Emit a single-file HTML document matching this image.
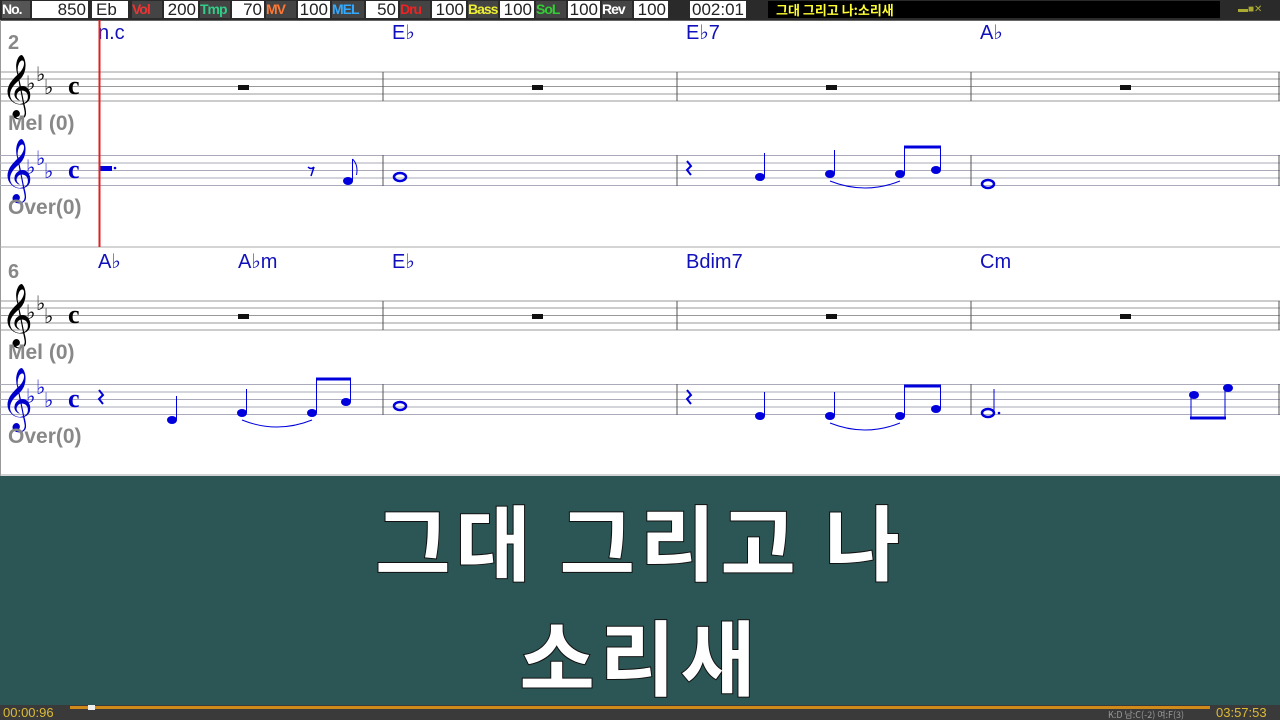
<!DOCTYPE html>
<html><head><meta charset="utf-8"><style>
body{margin:0;width:1280px;height:720px;overflow:hidden;background:#fff;font-family:"Liberation Sans","Noto Sans CJK KR",sans-serif;position:relative}
.top{position:absolute;left:0;top:0;width:1280px;height:20px;background:#2a2a2a;border-bottom:1px solid #666}
.top span{position:absolute;top:1px;height:17px;line-height:17px;font-size:17px}
.w{background:#fff;color:#222;text-align:right;padding-right:2px;box-sizing:border-box}
.lab{font-weight:bold;font-size:14px!important;letter-spacing:-1px}
.band{position:absolute;left:0;top:476px;width:1280px;height:229px;background:#2c5555}
.t{position:absolute;left:0;width:1280px;text-align:center;color:#fff;font-family:"Noto Sans CJK KR",sans-serif;font-weight:700;font-size:82px;letter-spacing:5px;line-height:1;-webkit-text-stroke:2px #111;paint-order:stroke fill}
.bot{position:absolute;left:0;top:705px;width:1280px;height:15px;background:#3a3a3a}
</style></head><body>
<div class="top">
<span class="lab" style="left:2px;width:28px;background:#555;color:#fff">No.</span>
<span class="w" style="left:32px;width:56px">850</span>
<span class="w" style="left:92px;width:36px;text-align:left;padding-left:4px">Eb</span>
<span class="lab" style="left:132px;width:30px;background:#444;color:#e33">Vol</span>
<span class="w" style="left:164px;width:34px">200</span>
<span class="lab" style="left:200px;width:30px;background:#444;color:#3c8">Tmp</span>
<span class="w" style="left:232px;width:32px">70</span>
<span class="lab" style="left:266px;width:30px;background:#444;color:#f73">MV</span>
<span class="w" style="left:298px;width:32px">100</span>
<span class="lab" style="left:332px;width:32px;background:#444;color:#3af">MEL</span>
<span class="w" style="left:366px;width:32px">50</span>
<span class="lab" style="left:400px;width:30px;background:#444;color:#e22">Dru</span>
<span class="w" style="left:432px;width:34px">100</span>
<span class="lab" style="left:468px;width:30px;background:#444;color:#ee3">Bass</span>
<span class="w" style="left:500px;width:34px">100</span>
<span class="lab" style="left:536px;width:30px;background:#444;color:#3c3">SoL</span>
<span class="w" style="left:568px;width:32px">100</span>
<span class="lab" style="left:602px;width:30px;background:#444;color:#fff">Rev</span>
<span class="w" style="left:634px;width:34px">100</span>
<span class="w" style="left:690px;width:56px">002:01</span>
<span style="left:768px;width:452px;background:#000;color:#ff3;font-weight:bold;font-size:13px;padding-left:8px;box-sizing:border-box;font-family:'Noto Sans CJK KR',sans-serif">그대 그리고 나:소리새</span>
<span style="left:1238px;width:40px;color:#aa3;font-size:10px">▬■✕</span>
</div>
<svg width="1280" height="476" style="position:absolute;left:0;top:0" font-family="Liberation Sans">
<line x1="0.5" y1="20" x2="0.5" y2="476" stroke="#999"/>
<line x1="0" y1="247" x2="1280" y2="247" stroke="#aaa"/>
<line x1="0" y1="475" x2="1280" y2="475" stroke="#aaa"/>
<g id="sys">
<g stroke="#999" stroke-width="1"><line x1="0" y1="72" x2="1280" y2="72"/><line x1="0" y1="79" x2="1280" y2="79"/><line x1="0" y1="86.5" x2="1280" y2="86.5"/><line x1="0" y1="94" x2="1280" y2="94"/><line x1="0" y1="101" x2="1280" y2="101"/></g>
<g stroke="#aab" stroke-width="1"><line x1="0" y1="155.5" x2="1280" y2="155.5"/><line x1="0" y1="163" x2="1280" y2="163"/><line x1="0" y1="170.5" x2="1280" y2="170.5"/><line x1="0" y1="178" x2="1280" y2="178"/><line x1="0" y1="185.5" x2="1280" y2="185.5"/></g>
<g stroke="#555"><line x1="383" y1="72" x2="383" y2="101"/><line x1="677" y1="72" x2="677" y2="101"/><line x1="971" y1="72" x2="971" y2="101"/><line x1="1279" y1="72" x2="1279" y2="101"/>
<line x1="383" y1="155" x2="383" y2="186"/><line x1="677" y1="155" x2="677" y2="186"/><line x1="971" y1="155" x2="971" y2="186"/><line x1="1279" y1="155" x2="1279" y2="186"/></g>
<text x="1" y="104" font-size="54" font-family="DejaVu Sans">𝄞</text>
<text x="26" y="90" font-size="20">♭</text><text x="36" y="81" font-size="20">♭</text><text x="44" y="94" font-size="20">♭</text>
<text x="68" y="94" font-size="26" font-weight="bold" font-family="Liberation Serif">c</text>
<g fill="#00c"><text x="1" y="188" font-size="54" font-family="DejaVu Sans">𝄞</text>
<text x="26" y="174" font-size="20">♭</text><text x="36" y="165" font-size="20">♭</text><text x="44" y="178" font-size="20">♭</text>
<text x="68" y="178" font-size="26" font-weight="bold" font-family="Liberation Serif">c</text></g>
<text x="8" y="130" font-size="21" font-weight="bold" fill="#888">Mel (0)</text>
<text x="8" y="214" font-size="21" font-weight="bold" fill="#888">Over(0)</text>
<rect x="238" y="85" width="11" height="5" fill="#111"/><rect x="532" y="85" width="11" height="5" fill="#111"/><rect x="826" y="85" width="11" height="5" fill="#111"/><rect x="1120" y="85" width="11" height="5" fill="#111"/>
</g>
<use href="#sys" y="229"/>
<text x="8" y="49" font-size="20" font-weight="bold" fill="#888">2</text>
<text x="8" y="278" font-size="20" font-weight="bold" fill="#888">6</text>
<g fill="#11b" font-size="20">
<text x="98" y="39">n.c</text><text x="392" y="39">E♭</text><text x="686" y="39">E♭7</text><text x="980" y="39">A♭</text>
<text x="98" y="268">A♭</text><text x="238" y="268">A♭m</text><text x="392" y="268">E♭</text><text x="686" y="268">Bdim7</text><text x="980" y="268">Cm</text>
</g>
<g fill="#00d" stroke="#00d">
<rect x="100" y="166" width="12" height="5" stroke="none"/><circle cx="115" cy="168" r="1.3" stroke="none"/>
<path d="M308 167 q3 3 6 0 l-3 9" fill="none" stroke-width="1.5"/>
<ellipse cx="348" cy="181" rx="5" ry="4" stroke="none"/><line x1="352.5" y1="181" x2="352.5" y2="159"/><path d="M352.5 159 q6 6 4 16" fill="none"/>
<ellipse cx="400" cy="177" rx="6" ry="4" fill="none" stroke-width="2.5"/>
<path d="M687 161 l4 5 l-4 4 l4 5" fill="none" stroke-width="2"/>
<ellipse cx="760" cy="177" rx="5" ry="4" stroke="none"/><line x1="764.5" y1="177" x2="764.5" y2="153"/>
<ellipse cx="830" cy="174" rx="5" ry="4" stroke="none"/><line x1="834.5" y1="174" x2="834.5" y2="150"/>
<ellipse cx="900" cy="174" rx="5" ry="4" stroke="none"/><line x1="904.5" y1="174" x2="904.5" y2="146"/>
<ellipse cx="936" cy="170" rx="5" ry="4" stroke="none"/><line x1="940.5" y1="170" x2="940.5" y2="146"/>
<line x1="904" y1="147" x2="941" y2="147" stroke-width="3"/>
<path d="M830 181 q35 14 70 0" fill="none"/>
<ellipse cx="988" cy="184" rx="6" ry="4" fill="none" stroke-width="2.5"/>
<path d="M99 390 l4 5 l-4 4 l4 5" fill="none" stroke-width="2"/>
<ellipse cx="172" cy="420" rx="5" ry="4" stroke="none"/><line x1="176.5" y1="420" x2="176.5" y2="396"/>
<ellipse cx="242" cy="413" rx="5" ry="4" stroke="none"/><line x1="246.5" y1="413" x2="246.5" y2="389"/>
<ellipse cx="312" cy="413" rx="5" ry="4" stroke="none"/><line x1="316.5" y1="413" x2="316.5" y2="378"/>
<ellipse cx="346" cy="402" rx="5" ry="4" stroke="none"/><line x1="350.5" y1="402" x2="350.5" y2="378"/>
<line x1="316" y1="379" x2="351" y2="379" stroke-width="3"/>
<path d="M242 420 q35 14 70 0" fill="none"/>
<ellipse cx="400" cy="406" rx="6" ry="4" fill="none" stroke-width="2.5"/>
<path d="M687 390 l4 5 l-4 4 l4 5" fill="none" stroke-width="2"/>
<ellipse cx="760" cy="416" rx="5" ry="4" stroke="none"/><line x1="764.5" y1="416" x2="764.5" y2="392"/>
<ellipse cx="830" cy="416" rx="5" ry="4" stroke="none"/><line x1="834.5" y1="416" x2="834.5" y2="392"/>
<ellipse cx="900" cy="416" rx="5" ry="4" stroke="none"/><line x1="904.5" y1="416" x2="904.5" y2="385"/>
<ellipse cx="936" cy="409" rx="5" ry="4" stroke="none"/><line x1="940.5" y1="409" x2="940.5" y2="385"/>
<line x1="904" y1="386" x2="941" y2="386" stroke-width="3"/>
<path d="M830 423 q35 14 70 0" fill="none"/>
<ellipse cx="988" cy="413" rx="6" ry="4" fill="none" stroke-width="2.5"/><line x1="994" y1="413" x2="994" y2="389"/><circle cx="999" cy="413" r="1.3" stroke="none"/>
<ellipse cx="1194" cy="395" rx="5" ry="4" stroke="none"/><line x1="1191" y1="395" x2="1191" y2="419"/>
<ellipse cx="1228" cy="388" rx="5" ry="4" stroke="none"/><line x1="1225" y1="388" x2="1225" y2="419"/>
<line x1="1190" y1="418" x2="1226" y2="418" stroke-width="3"/>
</g>
<line x1="99.5" y1="20" x2="99.5" y2="247" stroke="#d22" stroke-width="2"/>
</svg>
<div class="band">
<div class="t" style="top:22px">그대 그리고 나</div>
<div class="t" style="top:137px">소리새</div>
</div>
<div class="bot">
<span style="position:absolute;left:3px;top:0;color:#db3;font-size:13px">00:00:96</span>
<div style="position:absolute;left:70px;top:1px;width:1140px;height:3px;background:#d08a1a"></div>
<div style="position:absolute;left:88px;top:0;width:7px;height:5px;background:#eee"></div>
<span style="position:absolute;left:1108px;top:3px;color:#999;font-size:9px;font-family:'Noto Sans CJK KR',sans-serif">K:D 남:C(-2) 여:F(3)</span>
<span style="position:absolute;left:1216px;top:0;color:#db3;font-size:13px">03:57:53</span>
</div>
</body></html>
